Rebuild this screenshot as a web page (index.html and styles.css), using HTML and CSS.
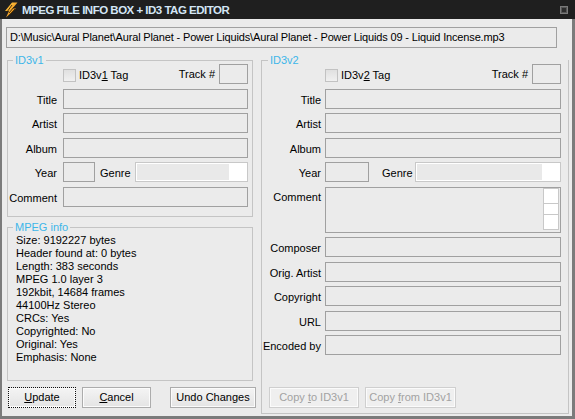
FILE: index.html
```html
<!DOCTYPE html>
<html>
<head>
<meta charset="utf-8">
<title>MPEG FILE INFO BOX + ID3 TAG EDITOR</title>
<link rel="stylesheet" href="styles.css">
</head>
<body>
<div class="window">
  <div class="titlebar">
    <svg class="app-icon" width="16" height="16" viewBox="0 0 16 16">
      <defs>
        <linearGradient id="bolt" x1="0" y1="0" x2="1" y2="1">
          <stop offset="0" stop-color="#ffd24a"/>
          <stop offset="1" stop-color="#e8780c"/>
        </linearGradient>
      </defs>
      <polygon points="9,0.5 14.5,0.5 9.5,6.5 13,6.5 3,15.5 6,9 2,9" fill="url(#bolt)"/>
      <path d="M4 10 L9 3 M6 11 L11 5 M7 12.5 L12 7" stroke="#3a2400" stroke-width="0.9"/>
    </svg>
    <span class="title">MPEG FILE INFO BOX + ID3 TAG EDITOR</span>
    <span class="close-btn"><span class="close-inner"></span></span>
  </div>
  <div class="client">
    <div class="path-field">D:\Music\Aural Planet\Aural Planet - Power Liquids\Aural Planet - Power Liquids 09 - Liquid Incense.mp3</div>
    <div class="columns">
      <div class="left-col">
        <div class="group group-v1">
          <div class="group-title">ID3v1</div>
          <div class="form form-v1">
            <span></span>
            <div class="top-row">
              <span class="checkbox"></span><span class="check-label">ID3v<u>1</u> Tag</span>
              <span class="track-label">Track #</span><span class="field track"></span>
            </div>
            <span class="lbl">Title</span><div class="field"></div>
            <span class="lbl">Artist</span><div class="field"></div>
            <span class="lbl">Album</span><div class="field"></div>
            <span class="lbl">Year</span>
            <div class="year-row">
              <div class="field year year-v1"></div>
              <span class="genre-label genre-v1">Genre</span>
              <div class="combo"><div class="combo-inner"></div></div>
            </div>
            <span class="lbl">Comment</span><div class="field"></div>
          </div>
        </div>
        <div class="group group-mpeg">
          <div class="group-title mpeg-title">MPEG info</div>
          <div class="info-lines">
            <div>Size: 9192227 bytes</div>
            <div>Header found at: 0 bytes</div>
            <div>Length: 383 seconds</div>
            <div>MPEG 1.0 layer 3</div>
            <div>192kbit, 14684 frames</div>
            <div>44100Hz Stereo</div>
            <div>CRCs: Yes</div>
            <div>Copyrighted: No</div>
            <div>Original: Yes</div>
            <div>Emphasis: None</div>
          </div>
        </div>
        <div class="buttons">
          <span class="btn btn-update focused"><span><u>U</u>pdate</span></span>
          <span class="btn btn-cancel"><span><u>C</u>ancel</span></span>
          <span class="btn btn-undo"><span>Undo Changes</span></span>
        </div>
      </div>
      <div class="group group-v2">
        <div class="group-title title-v2">ID3v2</div>
        <div class="form form-v2">
          <span></span>
          <div class="top-row">
            <span class="checkbox"></span><span class="check-label">ID3v<u>2</u> Tag</span>
            <span class="track-label">Track #</span><span class="field track"></span>
          </div>
          <span class="lbl">Title</span><div class="field"></div>
          <span class="lbl">Artist</span><div class="field"></div>
          <span class="lbl">Album</span><div class="field"></div>
          <span class="lbl">Year</span>
          <div class="year-row">
            <div class="field year year-v2"></div>
            <span class="genre-label genre-v2">Genre</span>
            <div class="combo"><div class="combo-inner"></div></div>
          </div>
          <span class="lbl lbl-top">Comment</span>
          <div class="field textarea">
            <div class="scroll"><span class="sb-top"></span><span class="sb-mid"></span><span class="sb-bot"></span></div>
          </div>
          <span class="lbl">Composer</span><div class="field"></div>
          <span class="lbl">Orig. Artist</span><div class="field"></div>
          <span class="lbl">Copyright</span><div class="field"></div>
          <span class="lbl">URL</span><div class="field"></div>
          <span class="lbl">Encoded by</span><div class="field"></div>
        </div>
        <div class="copy-buttons">
          <span class="btn disabled copy-to"><span>Copy <u>t</u>o ID3v1</span></span>
          <span class="btn disabled copy-from"><span>Copy <u>f</u>rom ID3v1</span></span>
        </div>
      </div>
    </div>
  </div>
</div>
</body>
</html>
```

FILE: styles.css
```css
html, body {
  margin: 0;
  padding: 0;
}

body {
  width: 575px;
  height: 419px;
  overflow: hidden;
  font-family: "Liberation Sans", Arial, sans-serif;
  font-size: 11px;
  color: #000;
  background: #ebebeb;
}

.window {
  width: 575px;
  height: 419px;
  display: flex;
  flex-direction: column;
}

.titlebar {
  height: 19px;
  flex: none;
  background: #1f1f1f;
  display: flex;
  align-items: center;
  padding-left: 3px;
  box-sizing: border-box;
}

.app-icon {
  flex: none;
  margin-right: 3px;
}

.title {
  font-weight: bold;
  font-size: 11.5px;
  letter-spacing: -0.5px;
  color: #d4e6f6;
}

.close-btn {
  margin-left: auto;
  margin-right: 7px;
  width: 8px;
  height: 8px;
  box-sizing: border-box;
  border: 1px solid #7a7a7a;
  background: #555;
  display: flex;
  align-items: center;
  justify-content: center;
}

.close-inner {
  width: 4px;
  height: 4px;
  background: #2c2c2c;
}

.client {
  flex: 1;
  background: #ebebeb;
  border-left: 2px solid #7b7b7b;
  border-right: 3px solid #7b7b7b;
  border-bottom: 3px solid #7b7b7b;
}

.path-field {
  margin: 8px 0 0 4px;
  width: 551px;
  height: 21px;
  box-sizing: border-box;
  border: 1px solid #a0a0a0;
  padding-left: 3px;
  line-height: 19px;
  white-space: nowrap;
  overflow: hidden;
  font-size: 11px;
  letter-spacing: -0.15px;
}

.columns {
  display: flex;
  gap: 8px;
  margin: 12px 0 0 5px;
}

.left-col {
  width: 246px;
  flex: none;
  display: flex;
  flex-direction: column;
}

.group {
  border: 1px solid #c4c4c4;
  box-sizing: border-box;
}

.group-title {
  display: table;
  margin: -7px 0 -3px 5px;
  padding: 0 2px;
  background: #ebebeb;
  color: #3db6e9;
  line-height: 13px;
}

.mpeg-title {
  margin-bottom: 0;
}

.title-v2 {
  margin-left: 6px;
}

.group-v1 {
  height: 157px;
}

.group-mpeg {
  height: 154px;
  margin-top: 10px;
}

.group-v2 {
  width: 308px;
  height: 354px;
  flex: none;
  display: flex;
  flex-direction: column;
}

.form {
  display: grid;
  row-gap: 4.5px;
  grid-auto-rows: 20px;
}

.form-v1 {
  grid-template-columns: 49px 185px;
  column-gap: 6px;
}

.form-v2 {
  grid-template-columns: 59px 236px;
  column-gap: 4px;
  grid-template-rows: 20px 20px 20px 20px 20px 46px 20px 20px 20px 20px 20px;
}

.lbl {
  text-align: right;
  line-height: 20px;
  padding-top: 1px;
  white-space: nowrap;
}

.lbl-top {
  align-self: start;
  padding-top: 0;
}

.field {
  border: 1px solid #a0a0a0;
  box-sizing: border-box;
  background: #ebebeb;
}

.top-row {
  display: flex;
  align-items: center;
}

.checkbox {
  width: 13px;
  height: 13px;
  box-sizing: border-box;
  border: 1px solid #c2c2c2;
  background: linear-gradient(#e0e0e0, #f0f0f0);
  margin-top: 2px;
}

.check-label {
  margin-left: 3px;
  margin-top: 1px;
}

.track-label {
  margin-left: auto;
  margin-right: 4px;
}

.field.track {
  width: 29px;
  height: 20px;
}

.year-row {
  display: flex;
}

.year-v1 {
  width: 32px;
  flex: none;
}

.year-v2 {
  width: 44px;
  flex: none;
}

.genre-label {
  flex: none;
  box-sizing: border-box;
  line-height: 20px;
  padding-top: 1px;
}

.genre-v1 {
  width: 40px;
  padding-left: 5px;
}

.genre-v2 {
  width: 46px;
  padding-left: 13px;
}

.combo {
  flex: 1;
  box-sizing: border-box;
  border: 1px solid #c8c8c8;
  background: #fff;
  padding: 1px;
  display: flex;
}

.combo-inner {
  flex: 1;
  margin-right: 17px;
  background: #e9e9e9;
}

.field.textarea {
  display: flex;
  justify-content: flex-end;
  padding: 0 1px 2px 0;
}

.scroll {
  width: 16px;
  display: flex;
  flex-direction: column;
}

.scroll span {
  box-sizing: border-box;
  border: 1px solid #c8c8c8;
  background: #fff;
}

.sb-top {
  height: 16px;
}

.sb-mid {
  height: 12px;
  margin-top: -1px;
}

.sb-bot {
  height: 16px;
  margin-top: -1px;
}

.info-lines {
  padding-left: 8px;
  line-height: 13px;
}

.buttons {
  display: flex;
  margin-top: 6px;
  padding-left: 1px;
}

.btn {
  flex: none;
  height: 21px;
  box-sizing: border-box;
  border: 1px solid #acacac;
  background: linear-gradient(#f4f4f4, #e4e4e4);
  box-shadow: inset 0 0 0 1px #fbfbfb;
  display: flex;
  align-items: center;
  justify-content: center;
  line-height: 13px;
  white-space: nowrap;
}

.btn.focused {
  border: 1px dotted #111;
}

.btn-update {
  width: 68px;
}

.btn-cancel {
  width: 69px;
  margin-left: 6px;
}

.btn-undo {
  width: 86px;
  margin-left: 19px;
}

.copy-buttons {
  margin-top: auto;
  display: flex;
  gap: 6px;
  padding: 0 0 5px 7px;
}

.btn.disabled {
  color: #a2a2a2;
  border-color: #cfcfcf;
  background: #efefef;
}

.copy-to {
  width: 90px;
}

.copy-from {
  width: 91px;
}
```
